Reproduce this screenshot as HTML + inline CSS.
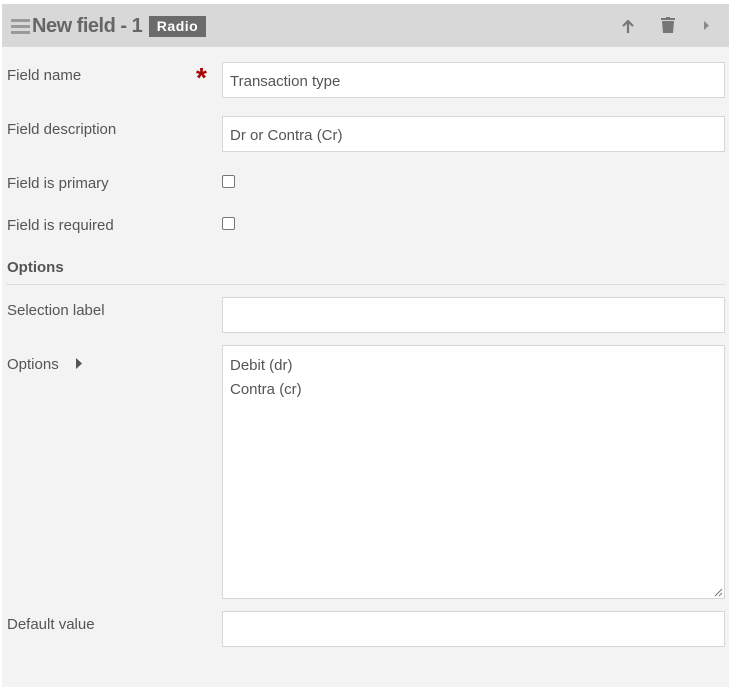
<!DOCTYPE html>
<html><head><style>
body{margin:0;background:#fff;width:738px;height:697px;position:relative;font-family:"Liberation Sans",sans-serif;color:#555;overflow:hidden}
.panel{position:absolute;left:2px;top:4px;width:727px;height:683px;background:#f3f3f3}
.hdr{position:absolute;left:2px;top:4px;width:727px;height:43px;background:#d8d8d8}
.t{position:absolute;font-size:15px;white-space:nowrap}
.in{position:absolute;left:222px;width:501px;background:#fff;border:1px solid #d6d6d6}
.cb{position:absolute;left:222px;width:11px;height:11px;border:1px solid #777;border-radius:2px;background:#fff}
</style></head><body>
<div class="panel"></div>
<div class="hdr"></div>
<div style="position:absolute;left:11px;top:19px;width:19px;height:3px;background:#999;box-shadow:0 6px 0 #999,0 12px 0 #999"></div>
<div class="t" style="left:32px;top:15px;font-size:20px;font-weight:bold;color:#666;letter-spacing:-0.5px">New field - 1</div>
<div style="position:absolute;left:149px;top:16px;width:57px;height:21px;background:#6b6b6b;color:#fff;font-size:14px;font-weight:bold;text-align:center;line-height:21px;letter-spacing:0.5px">Radio</div>
<svg style="position:absolute;left:620px;top:18px" width="16" height="16" viewBox="0 0 16 16"><path d="M8 15V3M3 8l5-5 5 5" stroke="#777" stroke-width="2.2" fill="none"/></svg>
<svg style="position:absolute;left:660px;top:17px" width="16" height="17" viewBox="0 0 16 17"><rect x="1" y="1" width="14" height="2" fill="#777"/><rect x="6" y="0" width="4" height="2" fill="#777"/><path d="M2 4h12l-1 12H3z" fill="#777"/></svg>
<svg style="position:absolute;left:703px;top:20px" width="8" height="11"><path d="M1 1l5 4.5L1 10z" fill="#888"/></svg>
<div class="t" style="left:7px;top:67px">Field name</div>
<div class="t" style="left:196px;top:62px;color:#a00;font-size:28px;font-weight:bold">*</div>
<div class="in" style="top:62px;height:34px"><div class="t" style="left:7px;top:10px">Transaction type</div></div>
<div class="t" style="left:7px;top:121px">Field description</div>
<div class="in" style="top:116px;height:34px"><div class="t" style="left:7px;top:10px">Dr or Contra (Cr)</div></div>
<div class="t" style="left:7px;top:175px">Field is primary</div>
<div class="cb" style="top:175px"></div>
<div class="t" style="left:7px;top:217px">Field is required</div>
<div class="cb" style="top:217px"></div>
<div class="t" style="left:7px;top:259px;font-weight:bold">Options</div>
<div style="position:absolute;left:6px;top:284px;width:719px;height:1px;background:#ddd"></div>
<div class="t" style="left:7px;top:302px">Selection label</div>
<div class="in" style="top:297px;height:34px"></div>
<div class="t" style="left:7px;top:356px">Options</div>
<svg style="position:absolute;left:76px;top:358px" width="7" height="11"><path d="M0 0l6 5.5L0 11z" fill="#555"/></svg>
<div class="in" style="top:345px;height:252px"><div class="t" style="left:7px;top:8px;line-height:24px">Debit (dr)<br>Contra (cr)</div>
<svg style="position:absolute;right:1px;bottom:1px" width="9" height="9"><path d="M8 1L1 8M8 5L5 8" stroke="#777" stroke-width="1"/></svg></div>
<div class="t" style="left:7px;top:616px">Default value</div>
<div class="in" style="top:611px;height:34px"></div>
</body></html>
